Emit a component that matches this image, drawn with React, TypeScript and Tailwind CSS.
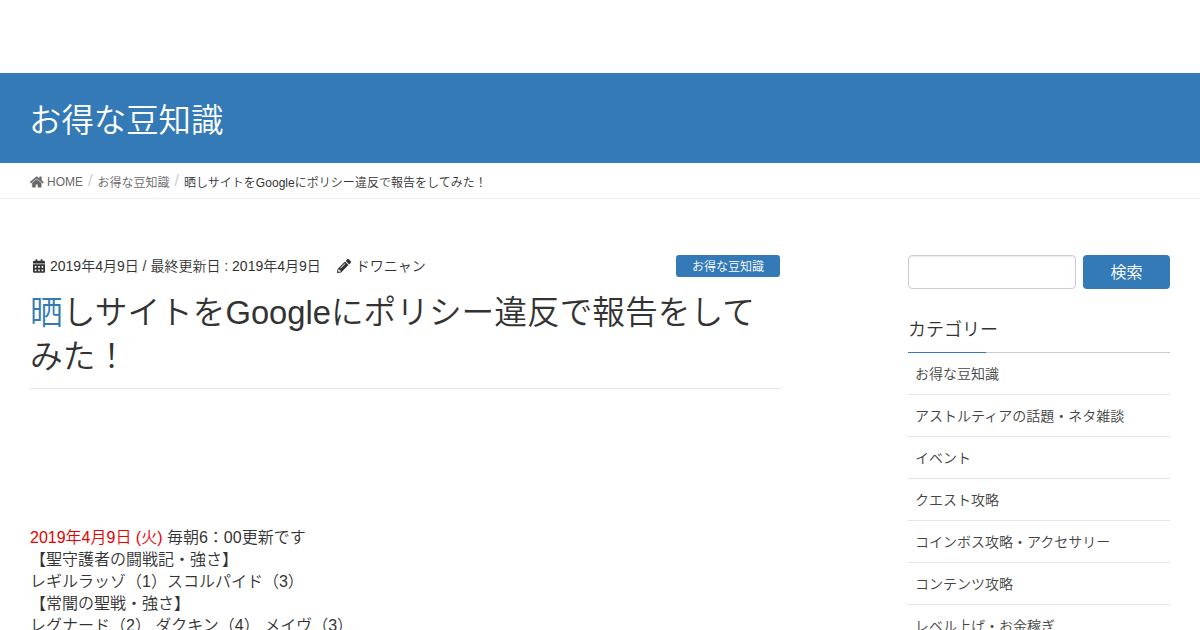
import { FaHome, FaCalendarAlt, FaPencilAlt } from 'react-icons/fa';

const categories = [
  'お得な豆知識',
  'アストルティアの話題・ネタ雑談',
  'イベント',
  'クエスト攻略',
  'コインボス攻略・アクセサリー',
  'コンテンツ攻略',
  'レベル上げ・お金稼ぎ',
];

function Breadcrumb() {
  return (
    <nav className="h-9 border-b border-[#eee]">
      <ol className="flex items-start px-[30px] pt-[7px] text-xs leading-6 text-[#666]">
        <li className="flex items-center">
          <FaHome className="mr-[3.5px] h-3 w-[13.5px] stroke-current stroke-[16]" />
          <a href="#">HOME</a>
        </li>
        <li className="flex">
          <span className="px-[5px] text-base leading-[22px] text-[#ccc]">/</span>
          <a href="#" className="pt-px">お得な豆知識</a>
        </li>
        <li className="flex text-[#333]">
          <span className="px-[5px] text-base leading-[22px] text-[#ccc]">/</span>
          <span className="pt-px tracking-[0.03px]">晒しサイトをGoogleにポリシー違反で報告をしてみた！</span>
        </li>
      </ol>
    </nav>
  );
}

function Article() {
  return (
    <article className="w-[750px]">
      <div className="flex h-[22px] items-center text-sm">
        <FaCalendarAlt className="mr-[5px] ml-[3px] h-3.5 w-3" />
        <span>2019年4月9日</span>
        <span className="whitespace-pre"> / 最終更新日 : 2019年4月9日</span>
        <FaPencilAlt className="mr-[5px] ml-4 size-3.5" />
        <span>ドワニャン</span>
        <a href="#" className="ml-auto h-[22px] w-[104px] rounded-[3px] bg-[#337ab7] text-center text-xs leading-6 text-white">
          お得な豆知識
        </a>
      </div>
      <h1 className="mt-[14px] border-b border-[#e5e5e5] pb-[9px] text-[32.7px] leading-[44px] first-letter:text-[#337ab7]">
        晒しサイトをGoogleにポリシー違反で報告をしてみた！
      </h1>
      <p className="mt-[138px] text-base leading-[22px]">
        <span className="text-[#e60000]">2019年4月9日 (火)</span> 毎朝6：00更新です
        <br />
        【聖守護者の闘戦記・強さ】
        <br />
        レギルラッゾ（1）スコルパイド（3）
        <br />
        【常闇の聖戦・強さ】
        <br />
        レグナード（2） ダクキン（4） メイヴ（3）
      </p>
    </article>
  );
}

function Sidebar() {
  return (
    <aside className="w-[262px]">
      <form className="flex justify-between">
        <input
          type="text"
          className="h-[34px] w-[168px] rounded border border-[#ccc] px-3 shadow-[inset_0_1px_1px_rgba(0,0,0,0.075)]"
        />
        <button type="button" className="h-[34px] w-[87px] rounded bg-[#337ab7] pt-px text-base text-white">
          検索
        </button>
      </form>
      <h2 className="relative mt-[27px] h-[37px] border-b border-[#ccc] text-lg leading-7 after:absolute after:-bottom-px after:left-0 after:h-px after:w-[78px] after:bg-[#337ab7]">
        カテゴリー
      </h2>
      <ul>
        {categories.map((name) => (
          <li key={name} className="h-[42px] border-b border-[#e5e5e5] px-[7px] text-sm leading-[42px] text-[#444]">
            <a href="#">{name}</a>
          </li>
        ))}
      </ul>
    </aside>
  );
}

export default function App() {
  return (
    <div className="h-[630px] overflow-hidden bg-white font-['Liberation_Sans','Noto_Sans_CJK_JP',sans-serif] font-[350] text-[#333]">
      <header className="h-[73px]" />
      <div className="h-[90px] bg-[#337ab7] px-[29px] pt-[26px] text-[32.4px] leading-[44px] text-white">
        お得な豆知識
      </div>
      <Breadcrumb />
      <main className="flex justify-between px-[30px] pt-14">
        <Article />
        <Sidebar />
      </main>
    </div>
  );
}
